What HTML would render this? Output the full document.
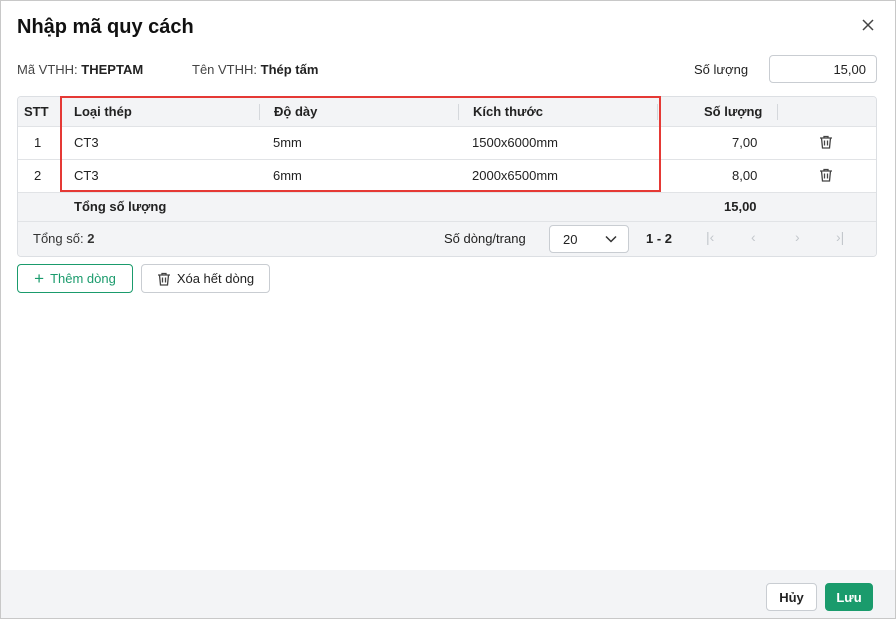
<!DOCTYPE html>
<html><head><meta charset="utf-8"><style>
*{box-sizing:border-box;margin:0;padding:0}
body{width:896px;height:619px;font-family:"Liberation Sans",sans-serif;font-size:13px;color:#222;background:#fff;position:relative;overflow:hidden}
.a{position:absolute;white-space:nowrap}
.b{font-weight:bold}
.tbl{position:absolute;left:17px;top:96px;width:860px;height:161px;border:1px solid #dcdfe3;border-radius:4px;overflow:hidden}
.row{position:absolute;left:0;width:858px;border-bottom:1px solid #e1e3e6}
.gray{background:#f3f4f6}
.sep{position:absolute;top:7px;width:1px;height:16px;background:#d5d8dc}
.trash{position:absolute;width:14px;height:14px}
.btn{position:absolute;height:29px;border-radius:4px;border:1px solid #c9cdd2;background:#fff;font-size:13px;display:flex;align-items:center;justify-content:center}
</style></head><body>
<div class="a b" style="left:17px;top:16px;font-size:20px;color:#111">Nhập mã quy cách</div>
<svg class="a" style="left:862px;top:19px" width="12" height="12" viewBox="0 0 12 12" stroke="#444" stroke-width="1.5"><path d="M1 1l10 10M11 1L1 11"/></svg>
<div class="a" style="left:17px;top:62px;color:#444">Mã VTHH: <span class="b" style="color:#222">THEPTAM</span></div>
<div class="a" style="left:192px;top:62px;color:#444">Tên VTHH: <span class="b" style="color:#222">Thép tấm</span></div>
<div class="a" style="left:694px;top:62px">Số lượng</div>
<div class="a" style="left:769px;top:55px;width:108px;height:28px;border:1px solid #c9cdd2;border-radius:4px;text-align:right;padding:6px 10px 0 0">15,00</div>

<div class="tbl">
 <div class="row gray b" style="top:0;height:30px">
  <div class="a" style="left:6px;top:7px">STT</div>
  <div class="sep" style="left:43px"></div>
  <div class="a" style="left:56px;top:7px">Loại thép</div>
  <div class="sep" style="left:241px"></div>
  <div class="a" style="left:256px;top:7px">Độ dày</div>
  <div class="sep" style="left:440px"></div>
  <div class="a" style="left:455px;top:7px">Kích thước</div>
  <div class="sep" style="left:639px"></div>
  <div class="a" style="left:686px;top:7px">Số lượng</div>
  <div class="sep" style="left:759px"></div>
 </div>
 <div class="row" style="top:30px;height:33px">
  <div class="a" style="left:16px;top:8px">1</div>
  <div class="a" style="left:56px;top:8px">CT3</div>
  <div class="a" style="left:255px;top:8px">5mm</div>
  <div class="a" style="left:454px;top:8px">1500x6000mm</div>
  <div class="a" style="left:714px;top:8px">7,00</div>
  <svg class="trash" style="left:801px;top:8px" viewBox="0 0 14 14" fill="none" stroke="#444" stroke-width="1.3"><path d="M1 3h12M5 3V1.5h4V3M2.5 3l1 10h7l1-10M5.5 5.5v5M8.5 5.5v5"/></svg>
 </div>
 <div class="row" style="top:63px;height:33px">
  <div class="a" style="left:16px;top:8px">2</div>
  <div class="a" style="left:56px;top:8px">CT3</div>
  <div class="a" style="left:255px;top:8px">6mm</div>
  <div class="a" style="left:454px;top:8px">2000x6500mm</div>
  <div class="a" style="left:714px;top:8px">8,00</div>
  <svg class="trash" style="left:801px;top:8px" viewBox="0 0 14 14" fill="none" stroke="#444" stroke-width="1.3"><path d="M1 3h12M5 3V1.5h4V3M2.5 3l1 10h7l1-10M5.5 5.5v5M8.5 5.5v5"/></svg>
 </div>
 <div class="row gray b" style="top:96px;height:29px">
  <div class="a" style="left:56px;top:6px">Tổng số lượng</div>
  <div class="a" style="left:706px;top:6px">15,00</div>
 </div>
 <div class="row gray" style="top:125px;height:36px;border:0">
  <div class="a" style="left:15px;top:9px;color:#333">Tổng số: <b>2</b></div>
  <div class="a" style="left:426px;top:9px">Số dòng/trang</div>
  <div class="a" style="left:531px;top:3px;width:80px;height:28px;border:1px solid #c9cdd2;border-radius:4px;background:#fff;padding:6px 0 0 13px">20</div>
  <svg class="a" style="left:587px;top:13px" width="12" height="8" viewBox="0 0 12 8" fill="none" stroke="#333" stroke-width="1.5"><path d="M1 1.5l5 5 5-5"/></svg>
  <div class="a b" style="left:628px;top:9px">1 - 2</div>
  <div class="a" style="left:688px;top:7px;color:#c3c7cc;font-size:14px">|‹</div>
  <div class="a" style="left:733px;top:7px;color:#c3c7cc;font-size:14px">‹</div>
  <div class="a" style="left:777px;top:7px;color:#c3c7cc;font-size:14px">›</div>
  <div class="a" style="left:818px;top:7px;color:#c3c7cc;font-size:14px">›|</div>
 </div>
</div>
<div class="a" style="left:60px;top:96px;width:601px;height:96px;border:2px solid #e53935"></div>

<div class="btn" style="left:17px;top:264px;width:116px;border-color:#1a9b6c;color:#1a9b6c"><span style="font-size:17px;margin-right:6px">+</span>Thêm dòng</div>
<div class="btn" style="left:141px;top:264px;width:129px;color:#222"><svg width="14" height="14" viewBox="0 0 14 14" fill="none" stroke="#444" stroke-width="1.3" style="margin-right:6px"><path d="M1 3h12M5 3V1.5h4V3M2.5 3l1 10h7l1-10M5.5 5.5v5M8.5 5.5v5"/></svg>Xóa hết dòng</div>

<div class="a" style="left:0;top:570px;width:896px;height:49px;background:#f3f4f6"></div>
<div class="btn" style="left:766px;top:583px;width:51px;height:28px;font-weight:bold">Hủy</div>
<div class="btn" style="left:825px;top:583px;width:48px;height:28px;background:#1a9b6c;border-color:#1a9b6c;color:#fff;font-weight:bold">Lưu</div>
<div class="a" style="left:0;top:0;width:896px;height:619px;border:1px solid #c8c8c8;pointer-events:none"></div>
</body></html>
